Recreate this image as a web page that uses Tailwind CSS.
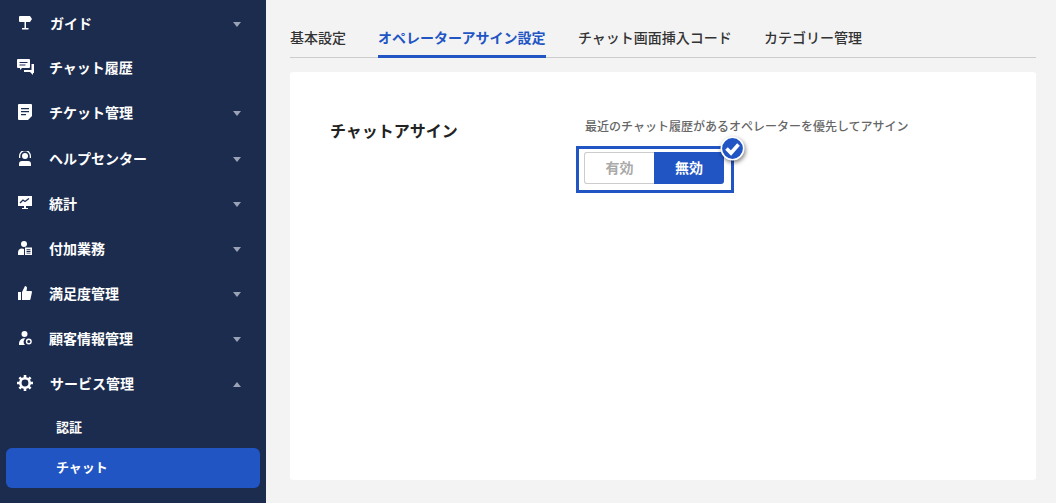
<!doctype html>
<html lang="ja"><head><meta charset="utf-8">
<script src="https://cdn.jsdelivr.net/npm/@tailwindcss/browser@4"></script>
</head>
<body class="w-[1056px] h-[503px] overflow-hidden bg-[#f3f3f3] font-['Noto_Sans_CJK_JP','Noto_Sans',sans-serif]">
<div class="flex h-[503px]">
<aside class="w-[266px] shrink-0 bg-[#1c2c4e] text-white text-sm font-bold overflow-hidden pt-[1px]">
  <div class="h-[44px] flex items-center pl-[19px] pr-[25px]">
    <svg class="w-[13px] h-[14px] mr-[18px]" viewBox="0 0 13 14" fill="#fff"><path d="M1 0h10l2 3-2 3H7v6h2.500v1.500h-6.500V12h2.500V6H1a1 1 0 0 1-1-1V1a1 1 0 0 1 1-1z"/></svg>
    <span class="flex-1">ガイド</span><span class="mt-[2px] w-0 h-0 border-x-[4px] border-x-transparent border-t-[5px] border-t-[#9aa3b5]"></span>
  </div>
  <div class="h-[44px] flex items-center pl-[17px] pr-[25px]">
    <svg class="w-[17px] h-[16px] mr-[15px]" viewBox="0 0 17 16" fill="#fff"><path d="M1 0h11a1 1 0 0 1 1 1v7a1 1 0 0 1-1 1H5l-2 2V9H1a1 1 0 0 1-1-1V1a1 1 0 0 1 1-1z"/><path d="M14.500 5H17v9h-1v2l-3-3H7v-2h7.500z"/><path d="M2.500 3h8v1h-8zM2.500 5.500h6v1h-6z" fill="#1c2c4e"/></svg>
    <span class="flex-1">チャット履歴</span>
  </div>
  <div class="h-[46px] flex items-center pl-[18px] pr-[25px]">
    <svg class="w-[14px] h-[16px] mr-[17px]" viewBox="0 0 14 16" fill="#fff"><path d="M1 0h12a1 1 0 0 1 1 1v11l-4 4H1a1 1 0 0 1-1-1V1a1 1 0 0 1 1-1z"/><path d="M3 4h8v1.200H3zM3 7h8v1.200H3zM3 10h5v1.200H3z" fill="#1c2c4e"/></svg>
    <span class="flex-1">チケット管理</span><span class="mt-[2px] w-0 h-0 border-x-[4px] border-x-transparent border-t-[5px] border-t-[#9aa3b5]"></span>
  </div>
  <div class="h-[46px] flex items-center pl-[18px] pr-[25px]">
    <svg class="w-[14px] h-[15px] mr-[17px]" viewBox="0 0 14 15" fill="#fff"><circle cx="7" cy="5" r="3"/><path d="M1 7V5a6 6 0 0 1 12 0v2h-1.300V5a4.700 4.700 0 0 0-9.400 0v2zM1 15v-2a3 3 0 0 1 3-3h6a3 3 0 0 1 3 3v2z"/></svg>
    <span class="flex-1">ヘルプセンター</span><span class="mt-[2px] w-0 h-0 border-x-[4px] border-x-transparent border-t-[5px] border-t-[#9aa3b5]"></span>
  </div>
  <div class="h-[44px] flex items-center pl-[18px] pr-[25px]">
    <svg class="w-[14px] h-[14px] mr-[17px]" viewBox="0 0 14 14" fill="#fff"><path d="M0 0h14v10H8v2h2v1H4v-1h2v-2H0z"/><path d="M2 7l3-3 2 1.500L11 2.500" fill="none" stroke="#1c2c4e" stroke-width="1.300"/></svg>
    <span class="flex-1">統計</span><span class="mt-[2px] w-0 h-0 border-x-[4px] border-x-transparent border-t-[5px] border-t-[#9aa3b5]"></span>
  </div>
  <div class="h-[46px] flex items-center pl-[18px] pr-[25px]">
    <svg class="w-[14px] h-[14px] mr-[17px]" viewBox="0 0 14 14" fill="#fff"><circle cx="6" cy="3" r="3"/><path d="M0 14v-3a4 4 0 0 1 6-3v6z"/><path d="M7 6.500h7V14H7z"/><path d="M8.500 8.300h4v.9h-4zM8.500 10h4v.9h-4zM8.500 11.700h4v.9h-4z" fill="#1c2c4e"/></svg>
    <span class="flex-1">付加業務</span><span class="mt-[2px] w-0 h-0 border-x-[4px] border-x-transparent border-t-[5px] border-t-[#9aa3b5]"></span>
  </div>
  <div class="h-[44px] flex items-center pl-[18px] pr-[25px]">
    <svg class="w-[14px] h-[14px] mr-[17px]" viewBox="0 0 14 14" fill="#fff"><path d="M0 6h3v8H0zM4 6l3-6c1.300 0 2 1 2 2L8.500 5H13a1 1 0 0 1 1 1l-1.500 7a1 1 0 0 1-1 1H4z"/></svg>
    <span class="flex-1">満足度管理</span><span class="mt-[2px] w-0 h-0 border-x-[4px] border-x-transparent border-t-[5px] border-t-[#9aa3b5]"></span>
  </div>
  <div class="h-[46px] flex items-center pl-[19px] pr-[25px]">
    <svg class="w-[13px] h-[14px] mr-[17px]" viewBox="0 0 13 14" fill="#fff"><circle cx="5.500" cy="3" r="3"/><path d="M0 14v-2a5 5 0 0 1 6.500-4.500A4 4 0 0 0 6 14z"/><circle cx="9.800" cy="10.500" r="2.300" fill="none" stroke="#fff" stroke-width="1.400"/></svg>
    <span class="flex-1">顧客情報管理</span><span class="mt-[2px] w-0 h-0 border-x-[4px] border-x-transparent border-t-[5px] border-t-[#9aa3b5]"></span>
  </div>
  <div class="h-[44px] flex items-center pl-[17px] pr-[25px]">
    <svg class="w-[16px] h-[16px] mr-[17px]" viewBox="0 0 16 16"><circle cx="8" cy="8" r="4.700" fill="none" stroke="#fff" stroke-width="2.600"/><path d="M6.700 0h2.600v3H6.700zM6.700 13h2.600v3H6.700zM0 6.700h3v2.600H0zM13 6.700h3v2.600h-3zM1.500 3.300l1.800-1.800 2 2-1.800 1.800zM10.700 12.500l1.800-1.800 2 2-1.800 1.800zM12.700 1.500l1.800 1.800-2 2-1.800-1.800zM3.500 10.700l1.800 1.800-2 2-1.800-1.800z" fill="#fff"/></svg>
    <span class="flex-1">サービス管理</span><span class="mt-[2px] w-0 h-0 border-x-[4px] border-x-transparent border-b-[5px] border-b-[#9aa3b5]"></span>
  </div>
  <div class="h-[43px] flex items-center pl-[56px] pt-[1px] text-[13px]">認証</div>
  <div class="mx-[6px] h-[40px] rounded-md bg-[#2155c4] flex items-center pl-[50px] pb-[2px] text-[13px]">チャット</div>
</aside>
<main class="flex-1 min-w-0 pl-6 pr-5 pt-[19px]">
  <nav class="h-[39px] flex border-b border-[#cccccc] text-sm text-[#333] font-medium">
    <span class="h-[39px] leading-[36px] w-[56px] mr-8">基本設定</span>
    <span class="h-[39px] leading-[36px] w-[168px] mr-8 text-[#2155c4] border-b-[3px] border-[#2155c4] font-bold">オペレーターアサイン設定</span>
    <span class="h-[39px] leading-[36px] w-[154px] mr-8">チャット画面挿入コード</span>
    <span class="h-[39px] leading-[36px]">カテゴリー管理</span>
  </nav>
  <section class="mt-[14px] h-[408px] bg-white rounded-[3px] flex pl-10 pt-[46px]">
    <h2 class="w-[255px] shrink-0 text-base font-bold text-[#222] leading-[26px] -mt-[1px]">チャットアサイン</h2>
    <div>
      <p class="text-xs text-[#666] font-medium leading-[16px]">最近のチャット履歴があるオペレーターを優先してアサイン</p>
      <div class="relative mt-[12px] w-[158px] -ml-[9px] h-[47px] border-[3px] border-[#2155c4] pl-[5px] pt-[3px] flex text-sm font-bold">
        <span class="w-[70px] h-[32px] pb-[2px] flex items-center justify-center border border-[#cccccc] border-r-0 rounded-l-[3px] text-[#aaaaaa] bg-white">有効</span>
        <span class="w-[70px] h-[32px] pb-[2px] flex items-center justify-center bg-[#2155c4] text-white rounded-r-[3px]">無効</span>
        <svg class="absolute -top-[13px] -right-[14px] w-[25px] h-[25px] drop-shadow-[1px_2px_2px_rgba(0,0,0,0.5)]" viewBox="0 0 25 25"><circle cx="12.500" cy="12.500" r="11.200" fill="#2155c4" stroke="#fff" stroke-width="1.600"/><path d="M6.500 12.500l4.500 4.500 7.500-8.500" fill="none" stroke="#fff" stroke-width="3.600"/></svg>
      </div>
    </div>
  </section>
</main>
</div>
</body></html>
